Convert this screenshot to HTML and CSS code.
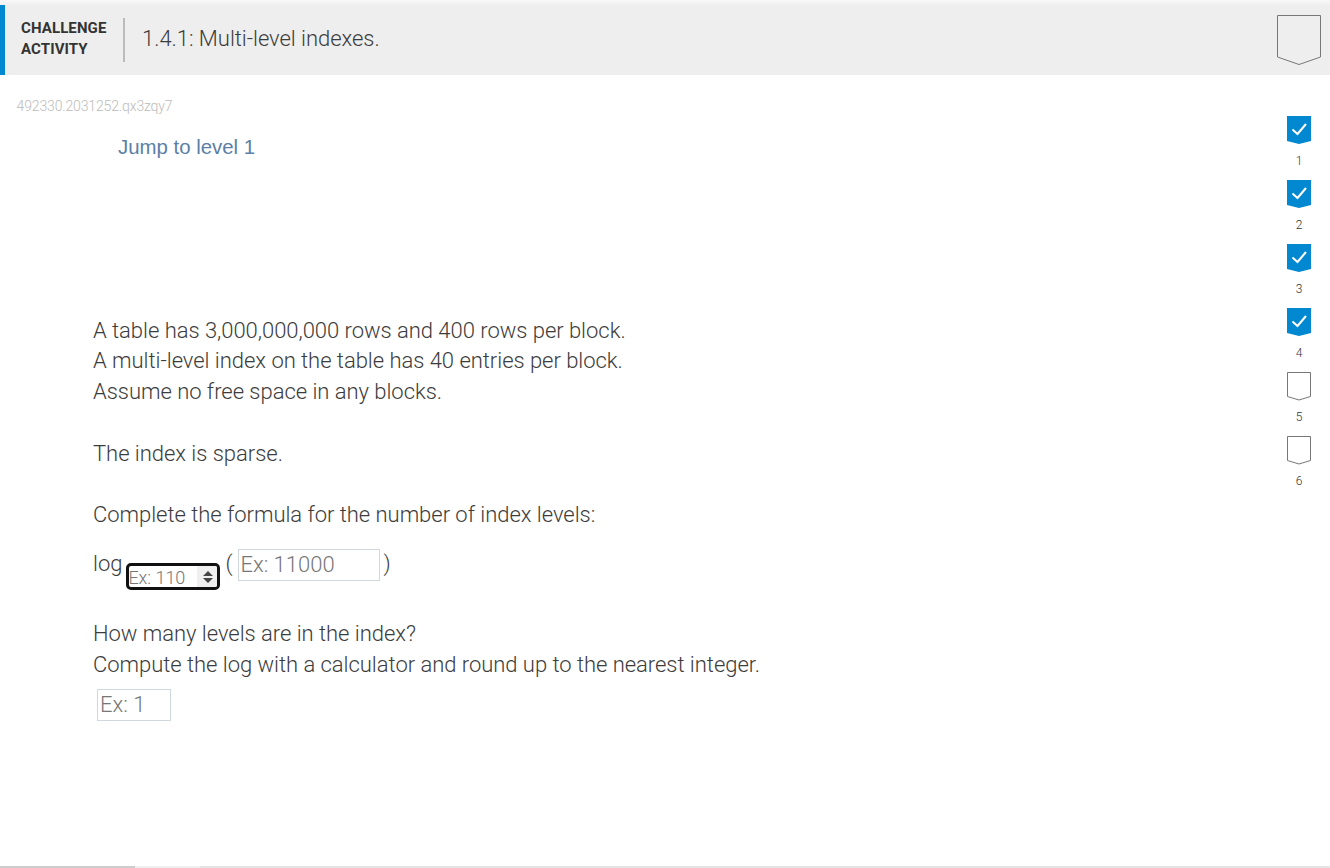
FILE: index.html
```html
<!DOCTYPE html>
<html lang="en">
<head>
<meta charset="utf-8">
<title>1.4.1: Multi-level indexes.</title>
<link rel="stylesheet" href="styles.css">
</head>
<body>
<div class="page">
  <div class="top-strip"></div>
  <header class="header">
    <div class="label">CHALLENGE<br>ACTIVITY</div>
    <h1 class="title">1.4.1: Multi-level indexes.</h1>
    <svg class="banner" width="45" height="50" viewBox="0 0 45 50"><path d="M1.500 0.500H44.500V42L23 49.500L1.500 42Z" fill="none" stroke="#777" stroke-width="1"/></svg>
  </header>
  <div class="body">
    <main class="main">
      <div class="code">492330.2031252.qx3zqy7</div>
      <div class="jump">Jump to level 1</div>
      <div class="prompt">
        <p class="para">A table has 3,000,000,000 rows and 400 rows per block.<br>A multi-level index on the table has 40 entries per block.<br>Assume no free space in any blocks.</p>
        <p class="para">The index is sparse.</p>
        <p class="para para-tight">Complete the formula for the number of index levels:</p>
        <div class="formula">
          <span>log</span>
          <span class="select"><span class="select-text">Ex: 110</span><span class="spinner"><svg width="12" height="16" viewBox="0 0 12 16"><path d="M6 2L11 7H1ZM6 14L1 9H11Z" fill="#444"/></svg></span></span>
          <span class="paren-open">(</span>
          <input class="field field-wide" placeholder="Ex: 11000">
          <span class="paren-close">)</span>
        </div>
        <p class="para para-last">How many levels are in the index?<br>Compute the log with a calculator and round up to the nearest integer.</p>
        <input class="field field-small" placeholder="Ex: 1">
      </div>
    </main>
    <aside class="levels">
      <div class="level"><svg class="flag" width="24" height="29" viewBox="0 0 24 29"><path d="M0 0H24V25L12 28L0 25Z" fill="#0288d1"/><path d="M5.500 13.500L10.500 18L19 8" fill="none" stroke="#fff" stroke-width="2"/></svg><span class="num">1</span></div>
      <div class="level"><svg class="flag" width="24" height="29" viewBox="0 0 24 29"><path d="M0 0H24V25L12 28L0 25Z" fill="#0288d1"/><path d="M5.500 13.500L10.500 18L19 8" fill="none" stroke="#fff" stroke-width="2"/></svg><span class="num">2</span></div>
      <div class="level"><svg class="flag" width="24" height="29" viewBox="0 0 24 29"><path d="M0 0H24V25L12 28L0 25Z" fill="#0288d1"/><path d="M5.500 13.500L10.500 18L19 8" fill="none" stroke="#fff" stroke-width="2"/></svg><span class="num">3</span></div>
      <div class="level"><svg class="flag" width="24" height="29" viewBox="0 0 24 29"><path d="M0 0H24V25L12 28L0 25Z" fill="#0288d1"/><path d="M5.500 13.500L10.500 18L19 8" fill="none" stroke="#fff" stroke-width="2"/></svg><span class="num">4</span></div>
      <div class="level"><svg class="flag" width="24" height="29" viewBox="0 0 24 29"><path d="M0.500 0.500H23.500V24.500L12 28L0.500 24.500Z" fill="none" stroke="#777"/></svg><span class="num">5</span></div>
      <div class="level"><svg class="flag" width="24" height="29" viewBox="0 0 24 29"><path d="M0.500 0.500H23.500V24.500L12 28L0.500 24.500Z" fill="none" stroke="#777"/></svg><span class="num">6</span></div>
    </aside>
  </div>
  <div class="bottom"><div class="bottom-a"></div><div class="bottom-b"></div><div class="bottom-c"></div></div>
</div>
</body>
</html>
```
FILE: styles.css
```css
* { box-sizing: border-box; }
html, body { margin: 0; padding: 0; background: #fff; }
body { font-family: Roboto, "Liberation Sans", sans-serif; color: #333; }
.page { width: 1330px; height: 868px; display: flex; flex-direction: column; overflow: hidden; }
.top-strip { height: 5px; background: linear-gradient(#f8f8f8, #f0f0f0); flex: none; }
.header { height: 70px; flex: none; background: #eeeeee; border-left: 5px solid #0288d1; display: flex; align-items: center; padding-left: 16px; padding-right: 9px; }
.label { font-size: 15px; font-weight: 700; line-height: 21px; letter-spacing: 0.1px; color: #333; padding-right: 16px; height: 44px; border-right: 2px solid #bbb; box-sizing: content-box; width: 86px; }
.title { margin: 0 0 4px 17px; font-size: 22px; font-weight: 300; letter-spacing: -0.04px; color: #3c3c3c; flex: 1; }
.banner { flex: none; }
.body { flex: 1; display: flex; min-height: 0; }
.main { flex: 1; min-width: 0; }
.code { margin: 23px 0 0 16.500px; font-size: 14px; line-height: 16px; font-weight: 300; color: #bbb; letter-spacing: -0.14px; }
.jump { margin: 21px 0 0 118px; font-family: "Liberation Sans", sans-serif; font-size: 20.400px; line-height: 24px; color: #5b7fa6; }
.prompt { margin: 156.700px 0 0 93px; font-size: 22px; font-weight: 300; line-height: 1.400; letter-spacing: -0.03px; color: #3c3c3c; }
.para { margin: 0 0 30.800px; }
.para-tight { margin-bottom: 18.100px; }
.para-last { margin-bottom: 8px; }
.formula { display: flex; align-items: flex-start; height: 70px; }
.select { display: flex; align-items: center; width: 94px; height: 27px; margin: 14px 0 0 4px; border: 3px solid #111; border-radius: 5px; background: #fff; font-size: 18px; overflow: hidden; }
.select-text { flex: 1; color: #777; line-height: 21px; padding-top: 2px; margin-left: -1px; }
.spinner { width: 20px; height: 21px; background: #efefef; display: flex; align-items: center; justify-content: flex-end; padding-right: 3px; }
.paren-open { margin-left: 5px; }
.paren-close { margin-left: 3px; }
.field { height: 32px; border: 1px solid #cfd8dc; border-radius: 0; padding: 0 2px; font-family: Roboto, sans-serif; font-size: 22px; font-weight: 300; color: #333; background: #fff; outline: none; }
.field::placeholder { color: #777; opacity: 1; }
.field-wide { width: 142px; margin: 0 0 0 6px; padding: 0 1px 2px; }
.field-small { width: 74px; margin: 0 0 0 4px; display: block; }
.levels { width: 64px; flex: none; padding-top: 41px; display: flex; flex-direction: column; }
.level { height: 64px; display: flex; flex-direction: column; align-items: flex-start; padding-left: 21px; }
.flag { display: block; flex: none; }
.num { width: 24px; text-align: center; font-size: 12px; font-weight: 300; line-height: 14px; margin-top: 9px; color: #333; }
.bottom { height: 2px; flex: none; display: flex; }
.bottom-a { width: 135px; background: #ccc; }
.bottom-b { width: 65px; background: #f0f0f0; }
.bottom-c { flex: 1; background: #e4e4e4; }
```
